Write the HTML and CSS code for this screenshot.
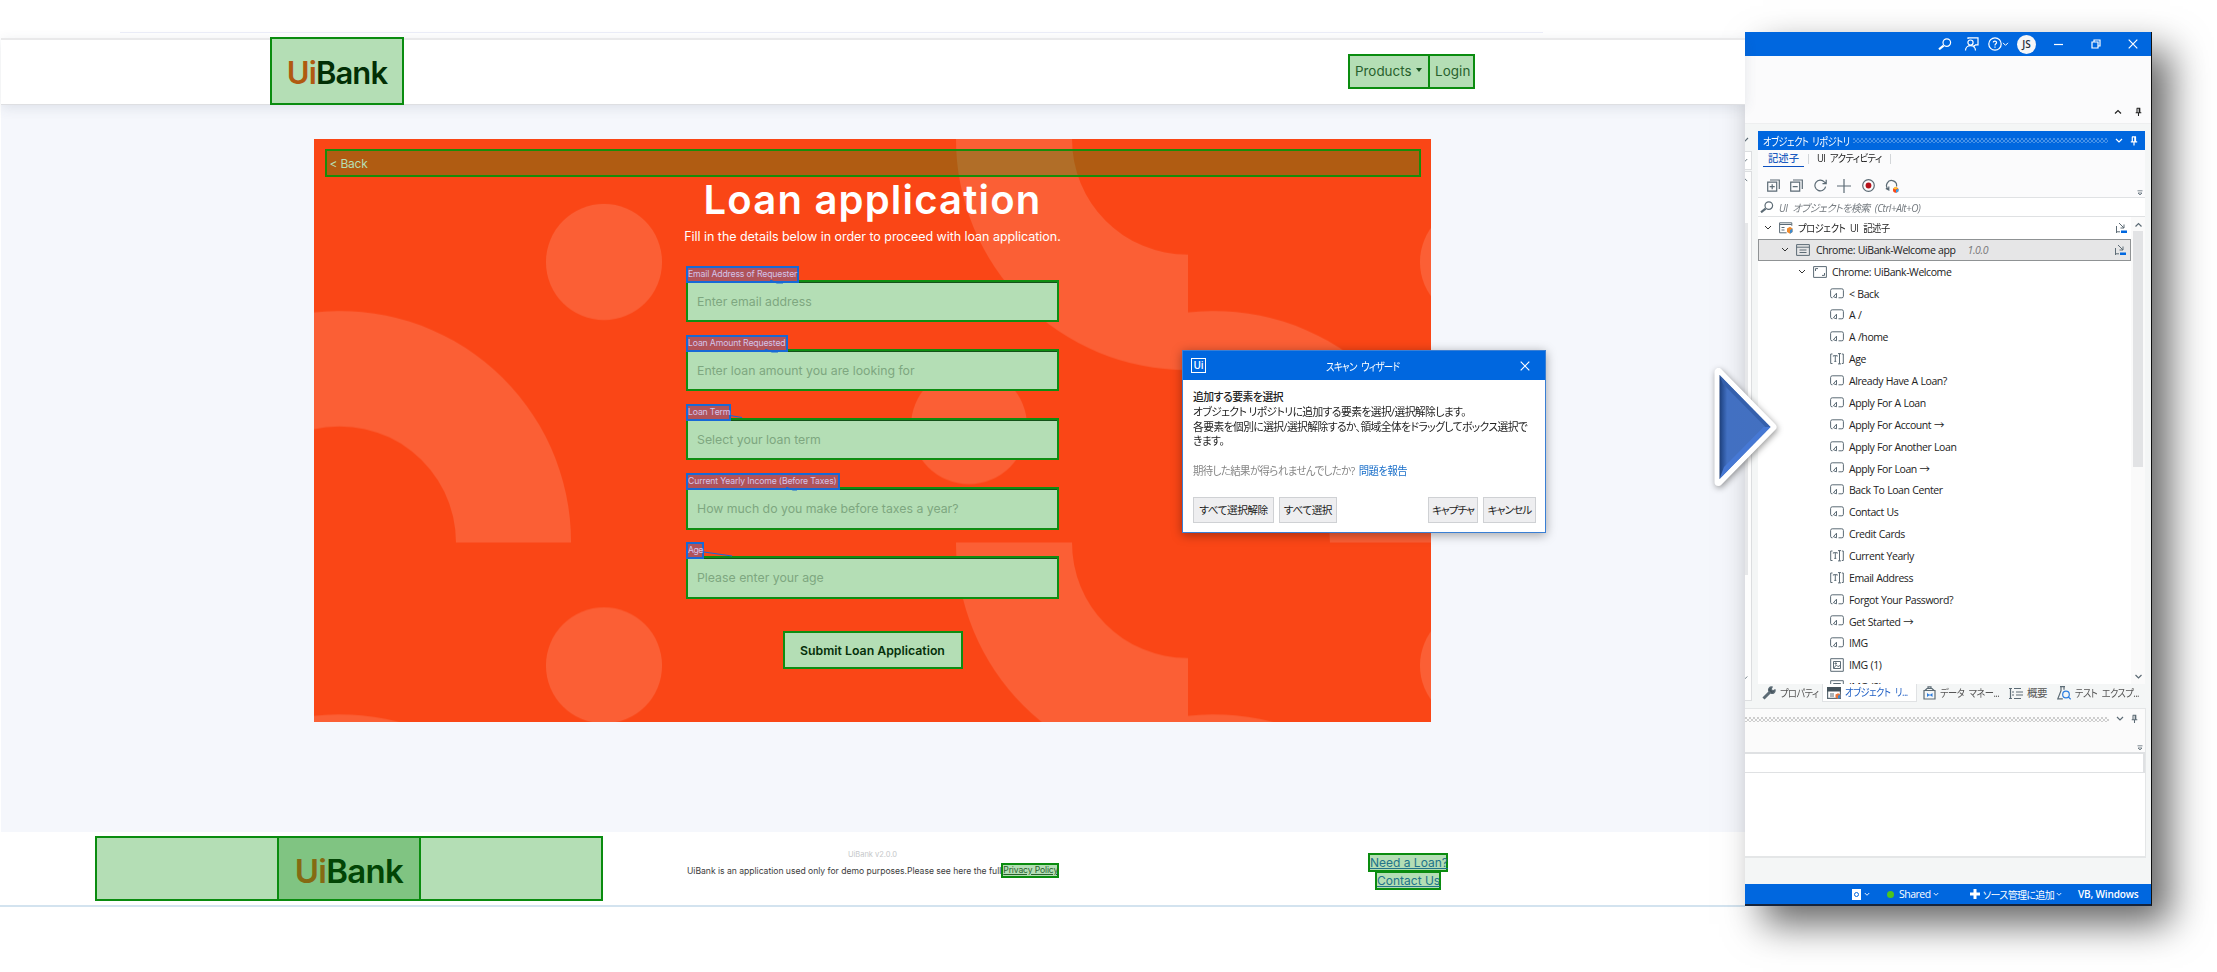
FILE: index.html
```html
<!DOCTYPE html>
<html lang="ja">
<head>
    <meta charset="UTF-8">
    <meta name="viewport" content="width=device-width, initial-scale=1.0">
    <title>UiBank - Loan application</title>
    <link rel="stylesheet" href="styles.css">
</head>
<body>
    <!-- Shared icons -->
    <svg class="sprite" width="0" height="0">
        <symbol id="button" viewBox="0 0 14 12"><path d="M2.500 9.800H2A1.500 1.500 0 0 1 .6 8.300V2.400A1.700 1.700 0 0 1 2.200.8h9.600a1.600 1.600 0 0 1 1.600 1.600v5.900a1.500 1.500 0 0 1-1.500 1.500H8.500M6.500 5.200v4.600L3.400 8.700z"/></symbol>
        <symbol id="input" viewBox="0 0 14 12"><path d="M2.500 1H.7v9.500h1.800M3.300 3.500V2.700h4v.8M5.300 2.700v5.600M4.300 8.400h2M8 .6h3M9.500.6v10.300M8 10.900h3M11.800 1h1.500v9.500h-1.500"/></symbol>
        <symbol id="image" viewBox="0 0 14 14"><path d="M.7.7h12.600v12.600H.7zM3.500 3.500h7v7h-7zM3.800 10l2.600-3 1.500 1.600 2.400-1.200M5 5h1.400v1H5z"/></symbol>
        <symbol id="screen" viewBox="0 0 14 12"><path d="M.6.6h12.800v10.800H.6zM2.500 5V2.600H5M11.500 7v2.400H9"/></symbol>
        <symbol id="app" viewBox="0 0 14 12"><path d="M.6.6h12.800v10.800H.6zM.6 3.200h12.800M3.500 6h7M3.500 8.500h7"/></symbol>
        <symbol id="down" viewBox="0 0 8 6"><path d="M1 1l3 3 3-3"/></symbol>
        <symbol id="up" viewBox="0 0 8 6"><path d="M1 4.500l3-3 3 3"/></symbol>
        <symbol id="pin" viewBox="0 0 8 10"><path d="M2 .8h4M2.300.8v5M5.500.8v5M4.800.8v5M.8 5.900h6.400M4 6v3.600"/></symbol>
        <symbol id="close" viewBox="0 0 10 10"><path d="M.7.7l8.600 8.600M9.300.7L.7 9.300"/></symbol>
        <symbol id="search" viewBox="0 0 14 12"><path d="M5.600 7.600L1 11.300" stroke-width="2.200"/><circle cx="8.800" cy="4.600" r="3.800"/></symbol>
        <symbol id="link" viewBox="0 0 12 12"><path d="M1.500 4v7M1.500 9.800H5M4 1l5 5M9 2.500V6H5.500"/><path d="M6 8.500h6V11H6z" fill="#0067df" stroke="none"/></symbol>
        <symbol id="overflow" viewBox="0 0 6 6"><path d="M.5.8h5M1 3l2 2 2-2z"/></symbol>
    </svg>

    <!-- UiBank web page -->
    <main class="bank">
        <nav class="navbar">
            <a class="logo mark"><span>Ui</span>Bank</a>
            <div class="menu">
                <a class="mark products">Products<i class="caret"></i></a>
                <a class="mark login">Login</a>
            </div>
        </nav>

        <section class="content">
            <div class="card">
                <svg class="pattern" width="1117" height="583">
                    <defs>
                        <pattern id="tile" width="874" height="403.5" patternUnits="userSpaceOnUse" x="-1">
                            <path d="M0 173.5A231 231 0 0 1 258 403.5H143A116 116 0 0 0 0 290.5z"/>
                            <path d="M643 0h116a115 115 0 0 0 115 115.5V231A231 231 0 0 1 643 0z"/>
                            <circle cx="291" cy="123" r="58"/>
                            <circle cx="656" cy="287" r="58"/>
                        </pattern>
                    </defs>
                    <rect width="1117" height="583" fill="url(#tile)"/>
                </svg>
                <a class="back">&lt; Back</a>
                <h1>Loan application</h1>
                <p class="intro">Fill in the details below in order to proceed with loan application.</p>
                <form>
                    <div class="field">
                        <label class="w-email">Email Address of Requester</label>
                        <div class="input">Enter email address</div>
                        <svg class="line line-email" width="14" height="5"><path d="M0 0l7 3h6"/></svg>
                    </div>
                    <div class="field">
                        <label class="w-amount">Loan Amount Requested</label>
                        <div class="input">Enter loan amount you are looking for</div>
                        <svg class="line line-amount" width="14" height="5"><path d="M0 0l7 3h6"/></svg>
                    </div>
                    <div class="field">
                        <label class="w-term">Loan Term</label>
                        <div class="input">Select your loan term</div>
                        <svg class="line line-term" width="14" height="5"><path d="M0 1.500l12 2"/></svg>
                    </div>
                    <div class="field">
                        <label class="w-income">Current Yearly Income (Before Taxes)</label>
                        <div class="input">How much do you make before taxes a year?</div>
                        <svg class="line line-income" width="14" height="5"><path d="M0 0l7 3h4"/></svg>
                    </div>
                    <div class="field">
                        <label class="w-age">Age</label>
                        <div class="input">Please enter your age</div>
                        <svg class="line line-age" width="30" height="6"><path d="M0 1l28 4"/></svg>
                    </div>
                    <div class="submit">Submit Loan Application</div>
                </form>
            </div>
        </section>

        <footer>
            <div class="footer-logo mark"><div class="logo-inner"><span>Ui</span>Bank</div></div>
            <div class="legal">
                <p class="version">UiBank v2.0.0</p>
                <p class="terms"><span>UiBank is an application used only for demo purposes.Please see here the full</span> <a>Privacy Policy</a></p>
            </div>
            <div class="links">
                <a class="need">Need a Loan?</a>
                <a class="contact">Contact Us</a>
            </div>
        </footer>
    </main>

    <!-- Studio window -->
    <aside class="studio">
        <div class="titlebar">
            <svg class="ic i-search" width="14" height="12"><use href="#search"/></svg>
            <svg class="ic i-person" width="15" height="14" viewBox="0 0 15 14"><path d="M4 2V.8h10v7h-2.500L10 9.300V8"/><circle cx="6.500" cy="5.600" r="2.600"/><path d="M1.500 13.500c0-6.500 10-6.500 10 0"/></svg>
            <svg class="ic i-help" width="14" height="14" viewBox="0 0 14 14"><circle cx="7" cy="7" r="6.200"/><path d="M5.200 5.400c.3-2 3.500-1.700 3.400.2C8.500 6.800 7 6.800 7 8.400M7 9.600v1.200"/></svg>
            <svg class="ic i-more" width="7" height="5"><use href="#down"/></svg>
            <span class="avatar">JS</span>
            <svg class="ic i-min" width="9" height="10" viewBox="0 0 9 10"><path d="M0 5.500h9"/></svg>
            <svg class="ic i-restore" width="10" height="10" viewBox="0 0 10 10"><path d="M1 3h6v6H1zM3 3V1h6v6H7"/></svg>
            <svg class="ic i-close" width="10" height="10"><use href="#close"/></svg>
        </div>
        <div class="ribbon">
            <svg class="ic" width="8" height="6"><use href="#up"/></svg>
            <svg class="ic" width="7" height="10"><use href="#pin"/></svg>
        </div>
        <div class="docks">
            <div class="sliver">
                <svg class="ic sliver-top" width="4" height="6" viewBox="4 0 4 6"><use href="#down" width="8" height="6"/></svg>
                <div class="sliver-box"><svg class="ic" width="3" height="5" viewBox="4 0 4 6"><use href="#down" width="8" height="6"/></svg></div>
                <div class="sliver-list">
                    <svg class="ic" width="3" height="6" viewBox="4 0 4 6"><use href="#up" width="8" height="6"/></svg>
                    <i></i>
                    <svg class="ic" width="3" height="6" viewBox="4 0 4 6"><use href="#down" width="8" height="6"/></svg>
                </div>
            </div>
            <div class="repository">
                <div class="panel-head">
                    <span>オブジェクト リポジトリ</span>
                    <i class="grip"></i>
                    <svg class="ic" width="8" height="6"><use href="#down"/></svg>
                    <svg class="ic" width="7" height="10"><use href="#pin"/></svg>
                </div>
                <div class="tabs"><b>記述子</b><div><span>UI アクティビティ</span></div></div>
                <div class="toolbar">
                    <svg class="ic" width="13" height="13" viewBox="0 0 13 13"><path d="M.7 3.200h9v9h-9zM3 1h9.300v9M5.200 5.200v5M2.700 7.700h5"/></svg>
                    <svg class="ic" width="13" height="13" viewBox="0 0 13 13"><path d="M.7 3.200h9v9h-9zM3 1h9.300v9M2.700 7.700h5"/></svg>
                    <svg class="ic" width="13" height="13" viewBox="0 0 13 13"><path d="M11.600 7.600A5.400 5.400 0 1 1 10.300 2.800L12 4.500M12.200.8v3.900H8.500"/></svg>
                    <svg class="ic" width="14" height="14" viewBox="0 0 14 14"><path d="M7 0v14M0 7h14"/></svg>
                    <svg class="ic" width="13" height="13" viewBox="0 0 13 13"><circle cx="6.500" cy="6.500" r="5.800"/><circle cx="6.500" cy="6.500" r="2.900" fill="#b5121b" stroke="none"/></svg>
                    <svg class="ic" width="14" height="14" viewBox="0 0 14 14"><path d="M3.500 10.500A5 5 0 1 1 11.500 7.500M.8 9.500l3 1.500V7.500"/><circle cx="10.700" cy="11" r="2.700" fill="#fa4616" stroke="none"/><path d="M8 9.500l2.700-1.700L13 9.300 10.500 10.500z" fill="#ffc52e" stroke="none"/><path d="M11 10.700l2.600-1v2.500L11 13.700z" fill="#38a3e8" stroke="none"/></svg>
                    <svg class="ic overflow" width="6" height="6"><use href="#overflow"/></svg>
                </div>
                <div class="search">
                    <svg class="ic" width="14" height="12"><use href="#search"/></svg>
                    <em>UI オブジェクトを検索 (Ctrl+Alt+O)</em>
                </div>
                <div class="tree-wrap">
                    <ul class="tree">
                        <li class="root"><svg class="ic" width="8" height="6"><use href="#down"/></svg><svg class="ic" width="14" height="12" viewBox="0 0 14 12"><path d="M.6.8h12.200v3M.6.8v10h7M.6 2.500h12M2.500 5.500h3M2.500 8h3"/><path d="M8 6.500l3-1.700 2.500 1.700v3.500l-2.500 1.700L8 10z" fill="#f08a2c" stroke="none"/><path d="M11 8.300l2.500-1.800v3.500L11 11.700z" fill="#3a8ad0" stroke="none"/></svg><span>プロジェクト UI 記述子</span><svg class="ic link" width="12" height="12"><use href="#link"/></svg></li>
                        <li class="app"><svg class="ic" width="8" height="6"><use href="#down"/></svg><svg class="ic" width="14" height="12"><use href="#app"/></svg><span>Chrome: UiBank-Welcome app</span><em>1.0.0</em><svg class="ic link" width="12" height="12"><use href="#link"/></svg></li>
                        <li class="page"><svg class="ic" width="8" height="6"><use href="#down"/></svg><svg class="ic" width="14" height="12"><use href="#screen"/></svg><span>Chrome: UiBank-Welcome</span></li>
                        <li><svg class="ic" width="14" height="12"><use href="#button"/></svg><span>&lt; Back</span></li>
                        <li><svg class="ic" width="14" height="12"><use href="#button"/></svg><span>A /</span></li>
                        <li><svg class="ic" width="14" height="12"><use href="#button"/></svg><span>A /home</span></li>
                        <li><svg class="ic" width="14" height="12"><use href="#input"/></svg><span>Age</span></li>
                        <li><svg class="ic" width="14" height="12"><use href="#button"/></svg><span>Already Have A Loan?</span></li>
                        <li><svg class="ic" width="14" height="12"><use href="#button"/></svg><span>Apply For A Loan</span></li>
                        <li><svg class="ic" width="14" height="12"><use href="#button"/></svg><span>Apply For Account →</span></li>
                        <li><svg class="ic" width="14" height="12"><use href="#button"/></svg><span>Apply For Another Loan</span></li>
                        <li><svg class="ic" width="14" height="12"><use href="#button"/></svg><span>Apply For Loan →</span></li>
                        <li><svg class="ic" width="14" height="12"><use href="#button"/></svg><span>Back To Loan Center</span></li>
                        <li><svg class="ic" width="14" height="12"><use href="#button"/></svg><span>Contact Us</span></li>
                        <li><svg class="ic" width="14" height="12"><use href="#button"/></svg><span>Credit Cards</span></li>
                        <li><svg class="ic" width="14" height="12"><use href="#input"/></svg><span>Current Yearly</span></li>
                        <li><svg class="ic" width="14" height="12"><use href="#input"/></svg><span>Email Address</span></li>
                        <li><svg class="ic" width="14" height="12"><use href="#button"/></svg><span>Forgot Your Password?</span></li>
                        <li><svg class="ic" width="14" height="12"><use href="#button"/></svg><span>Get Started →</span></li>
                        <li><svg class="ic" width="14" height="12"><use href="#button"/></svg><span>IMG</span></li>
                        <li><svg class="ic" width="14" height="14"><use href="#image"/></svg><span>IMG (1)</span></li>
                        <li><svg class="ic" width="14" height="14"><use href="#image"/></svg><span>IMG (2)</span></li>
                    </ul>
                    <div class="scrollbar">
                        <svg class="ic" width="9" height="6"><use href="#up"/></svg>
                        <i></i>
                        <svg class="ic" width="9" height="6"><use href="#down"/></svg>
                    </div>
                </div>
                <div class="bottom-tabs">
                    <div class="t-prop"><svg class="ic" width="14" height="14" viewBox="0 0 14 14"><path d="M1.500 12.500L8 6" stroke-width="3"/><path d="M13 3.800L10.800 5 9 3.200 10.200 1C7.500.5 6 3 6.800 5l2.200 2.200c2.200.8 4.600-1 4-3.400z" fill="#44525b"/></svg><span>プロパティ</span></div>
                    <div class="t-obj"><svg class="ic" width="14" height="12" viewBox="0 0 14 12"><path d="M.6.6h12.800v10.800H.6zM3 7h4M3 9h4"/><path d="M0 0h14v4.500H0z" fill="#44525b" stroke="none"/><path d="M8.500 7.500l2.500-1.200 2.500 1.200v3L11 12l-2.500-1.500z" fill="#e8743a" stroke="none"/><path d="M11 8.800l2.500-1.300v3L11 12z" fill="#3a8ad0" stroke="none"/></svg><span>オブジェクト リ...</span></div>
                    <div class="t-data"><svg class="ic" width="13" height="14" viewBox="0 0 13 14"><path d="M1 4.500h11v8.500H1zM2 4.500L4 2.500h5l2 2M5 2.500V.8h3v1.700"/><path d="M4 7v4l2-1.500h1.500l2 1.500V7l-2 1.500H6z" fill="#2b7de0" stroke="none"/></svg><span>データ マネー...</span></div>
                    <div class="t-outline"><svg class="ic" width="14" height="13" viewBox="0 0 14 13"><path d="M0 1.500h3M0 11.500h3M1.500 2v9M5 1.500h7M7 5h7M7 8h7M5 11.500h7M3 5h2M3 8h2"/></svg><span>概要</span></div>
                    <div class="t-test"><svg class="ic" width="14" height="14" viewBox="0 0 14 14"><path d="M3 .7h5M4 .7v4L.8 12.800h5M7 .7v3"/><g stroke="#2b7de0"><circle cx="9" cy="8.500" r="3.300"/><path d="M11.300 10.800l2.400 2.500"/></g></svg><span>テスト エクスプ...</span></div>
                </div>
            </div>
        </div>
        <div class="output">
            <div class="output-head">
                <i class="grip"></i>
                <svg class="ic" width="8" height="6"><use href="#down"/></svg>
                <svg class="ic" width="7" height="10"><use href="#pin"/></svg>
            </div>
            <div class="output-tools"><svg class="ic" width="6" height="6"><use href="#overflow"/></svg></div>
            <div class="output-input"></div>
        </div>
        <div class="statusbar">
            <span class="s-icon"><i></i></span>
            <svg class="ic s-c1" width="6" height="5"><use href="#down"/></svg>
            <i class="dot"></i>
            <span class="shared">Shared</span>
            <svg class="ic s-c2" width="6" height="5"><use href="#down"/></svg>
            <svg class="ic s-plus" width="10" height="10" viewBox="0 0 10 10"><path d="M5 0v10M0 5h10"/></svg>
            <span class="source">ソース管理に追加</span>
            <svg class="ic s-c3" width="6" height="5"><use href="#down"/></svg>
            <b>VB, Windows</b>
        </div>
    </aside>

    <svg class="arrow" width="80" height="136" viewBox="0 0 80 136">
        <defs>
            <linearGradient id="blue" x1="0" y1="0" x2="1" y2="0">
                <stop offset="0" stop-color="#1f3f78"/>
                <stop offset=".05" stop-color="#284f94"/>
                <stop offset=".15" stop-color="#4270c2"/>
                <stop offset="1" stop-color="#4370c0"/>
            </linearGradient>
        </defs>
        <path class="arrow-edge" d="M12.500 13v110l54-55z"/>
        <path d="M13.500 16v104L64.500 68z" fill="url(#blue)"/>
        <path d="M13.500 16L64.500 68l-5 0L17 25z" fill="#3560ac"/>
        <path d="M13.500 120L64.500 68l-7 0L18 108z" fill="#4678d4"/>
    </svg>

    <!-- Scan wizard -->
    <div class="dialog">
        <div class="dialog-head">
            <span class="ui-icon">Ui</span>
            <span class="dialog-title">スキャン ウィザード</span>
            <svg class="ic" width="10" height="10"><use href="#close"/></svg>
        </div>
        <div class="dialog-body">
            <h2>追加する要素を選択</h2>
            <p>オブジェクト リポジトリに追加する要素を選択/選択解除します。<br>各要素を個別に選択/選択解除するか、領域全体をドラッグしてボックス選択で<br>きます。</p>
            <p class="hint">期待した結果が得られませんでしたか? <a>問題を報告</a></p>
            <div class="buttons">
                <span class="b1">すべて選択解除</span>
                <span class="b2">すべて選択</span>
                <span class="b3">キャプチャ</span>
                <span class="b4">キャンセル</span>
            </div>
        </div>
    </div>
</body>
</html>
```
FILE: styles.css
```css
* {
    box-sizing: border-box;
}

body {
    position: relative;
    display: grid;
    grid-template-columns: 1745px 407px;
    align-items: start;
    width: 2217px;
    height: 972px;
    margin: 0;
    overflow: hidden;
    background: #fff;
    font-family: Inter, "Noto Sans CJK JP", sans-serif;
    font-size: 12px;
}

h1, h2, p, ul {
    margin: 0;
    padding: 0;
}

i {
    display: block;
}

.sprite {
    position: absolute;
}

.ic {
    flex: none;
    fill: none;
    stroke: #5c6b75;
    stroke-width: 1.2;
}

/* UiBank page */
.bank {
    height: 907px;
    padding-top: 32px;
    background: linear-gradient(#eceef8, #eceef8) 120px 32px / 1423px 1px no-repeat;
}

.navbar {
    position: relative;
    z-index: 1;
    display: flex;
    align-items: center;
    height: 67px;
    margin: 6px 0 0 1px;
    padding: 0 0 2px 269px;
    background: #fff;
    border-top: 2px solid #e9e9ea;
    border-bottom: 1px solid #dedfe2;
    box-shadow: 0 3px 12px rgba(60, 70, 100, 0.12);
}

.mark {
    background: #b4deb5;
    border: 2px solid #0a8c0f;
}

.logo {
    display: flex;
    align-items: center;
    justify-content: center;
    width: 134px;
    height: 68px;
    margin: -2px 0;
    padding-top: 3px;
    color: #022f05;
    font-size: 31px;
    font-weight: 600;
    letter-spacing: -0.9px;
}

.logo span {
    color: #b05a11;
}

.menu {
    display: flex;
    margin-left: 944px;
}

.menu a {
    display: flex;
    align-items: center;
    height: 35px;
    padding-left: 5px;
    color: #28612d;
    font-size: 13.4px;
}

.products {
    width: 82px;
}

.login {
    width: 47px;
    margin-left: -2px;
    letter-spacing: 0.1px;
}

.caret {
    margin: -2px 0 0 4px;
    border: 3.5px solid transparent;
    border-top: 4px solid #1b5420;
    border-bottom: 0;
}

.content {
    height: 727px;
    margin-left: 1px;
    padding: 34px 0 0 313px;
    background: #f5f7fc;
}

.card {
    position: relative;
    display: flex;
    flex-direction: column;
    align-items: center;
    width: 1117px;
    height: 583px;
    padding-top: 10px;
    background: #fa4616;
    color: #fff;
}

.pattern {
    position: absolute;
    top: 0;
    left: 0;
    fill: #fb5f35;
}

.back {
    position: relative;
    width: 1096px;
    height: 28px;
    padding-left: 3px;
    background: rgba(5, 146, 10, 0.3);
    border: 2px solid #188c0a;
    color: #b6dfb4;
    font-size: 12px;
    line-height: 25px;
    letter-spacing: -0.2px;
}

h1 {
    position: relative;
    height: 52px;
    font-size: 40px;
    font-weight: 600;
    line-height: 45px;
    letter-spacing: 1.2px;
    white-space: nowrap;
}

.intro {
    position: relative;
    font-size: 12.5px;
    line-height: 16px;
    white-space: nowrap;
    letter-spacing: -0.04px;
}

form {
    position: relative;
    display: flex;
    flex-direction: column;
    width: 373px;
    margin-top: 20.6px;
}

.field {
    position: relative;
    height: 69.2px;
}

label {
    position: relative;
    z-index: 1;
    display: block;
    height: 17px;
    margin-bottom: -3px;
    background: #b0535a;
    border: 2px solid #1769d6;
    color: #d3c3ea;
    font-size: 8.7px;
    line-height: 12px;
    white-space: nowrap;
    letter-spacing: -0.16px;
}

.w-email { width: 113px; }
.w-amount { width: 102px; }
.w-term { width: 45px; }
.w-income { width: 154px; }
.w-age { width: 18px; letter-spacing: -0.5px; }

.input {
    height: 42.5px;
    padding-left: 9px;
    background: #b4deb5;
    border: 2px solid #0f8d12;
    box-shadow: inset 0 1px 0 #14521a;
    color: #7ea780;
    font-size: 12.3px;
    line-height: 39px;
}

.line {
    position: absolute;
    z-index: 2;
    top: 14px;
    fill: none;
    stroke: #1769d6;
    stroke-width: 1.2;
}

.line-email { left: 84px; }
.line-amount { left: 79px; }
.line-term { left: 44px; top: 10px; }
.line-income { left: 100px; }
.line-age { left: 18px; top: 9px; }

.submit {
    align-self: center;
    width: 180px;
    height: 38px;
    margin-top: 19.4px;
    background: #b4deb5;
    border: 2px solid #0f8d12;
    color: #06300a;
    font-size: 12.3px;
    font-weight: 600;
    line-height: 35px;
    text-align: center;
}

footer {
    display: flex;
    height: 75px;
    padding: 4px 0 0 95px;
    border-bottom: 2px solid #d3e3ef;
    background: #fff;
}

.footer-logo {
    display: flex;
    justify-content: center;
    width: 508px;
    height: 65px;
}

.logo-inner {
    width: 144px;
    background: #80c482;
    border: solid #0a8c0f;
    border-width: 0 2px;
    color: #024505;
    font-size: 33px;
    font-weight: 600;
    line-height: 66px;
    letter-spacing: -0.7px;
    text-align: center;
}

.logo-inner span {
    color: #856a12;
}

.legal {
    width: 373px;
    margin-left: 83px;
    text-align: center;
    white-space: nowrap;
}

.version {
    margin-top: 13px;
    color: #c5c7c9;
    font-size: 7.5px;
    line-height: 11px;
}

.terms {
    display: flex;
    justify-content: space-between;
    align-items: center;
    margin-top: 3px;
    padding-left: 1px;
    color: #3c3c3c;
    font-size: 8.6px;
    line-height: 14px;
    letter-spacing: -0.02px;
}

.terms a {
    width: 58px;
    height: 15px;
    background: #b4deb5;
    border: 2px solid #0a8c0f;
    color: #28612d;
    line-height: 10px;
    letter-spacing: -0.15px;
    text-decoration: underline;
}

.links {
    display: flex;
    flex-direction: column;
    align-items: center;
    width: 80px;
    margin: 17px 0 0 309px;
}

.links a {
    height: 19px;
    margin-bottom: -1px;
    background: #b4deb5;
    border: 2px solid #0a8c0f;
    color: #227389;
    font-size: 12px;
    line-height: 15px;
    text-align: center;
    text-decoration: underline;
    white-space: nowrap;
}

.need { width: 80px; }
.contact { width: 66px; }

/* Studio window */
.studio {
    position: relative;
    height: 874px;
    margin-top: 32px;
    background: #f4f6f6;
    border-right: 1px solid #111;
    border-bottom: 2px solid #15243c;
    box-shadow: 18px 18px 36px rgba(0, 0, 0, 0.6);
    color: #222;
    font-family: "Open Sans", "Noto Sans CJK JP", sans-serif;
    font-size: 11px;
    font-feature-settings: "palt";
    white-space: nowrap;
}

.titlebar {
    display: flex;
    align-items: center;
    height: 24px;
    padding-left: 193px;
    background: #0067df;
}

.titlebar .ic,
.statusbar .ic,
.panel-head .ic,
.dialog .ic {
    stroke: #fff;
}

.i-person { margin-left: 12px; }
.i-help { margin-left: 9px; }

.avatar {
    width: 19px;
    height: 19px;
    margin-left: 8px;
    border-radius: 50%;
    background: #f6f7f8;
    color: #26303a;
    font-size: 10px;
    font-weight: 600;
    line-height: 19px;
    text-align: center;
}

.i-min { margin-left: 18px; }
.i-restore { margin-left: 28px; }
.i-close { margin-left: 27px; }

.ribbon {
    display: flex;
    align-items: center;
    justify-content: flex-end;
    gap: 13px;
    height: 68px;
    padding: 44px 9px 0 0;
    background: #fbfbfc;
    border-bottom: 1px solid #eeeff0;
}

.ribbon .ic {
    stroke: #222;
}

.docks {
    display: flex;
    height: 577px;
}

.sliver {
    width: 7px;
    padding-top: 13px;
}

.sliver .ic {
    display: block;
}

.sliver-box {
    height: 19px;
    margin-top: 8px;
    padding-top: 6px;
    background: #fff;
    border: solid #dcdee0;
    border-width: 1px 1px 1px 0;
}

.sliver-list {
    display: flex;
    flex-direction: column;
    height: 530px;
    margin-top: 1px;
    padding: 5px 0 19px;
    background: #fdfdfd;
    border: solid #dcdee0;
    border-width: 1px 1px 1px 0;
}

.sliver-list i {
    flex: 1;
    width: 3px;
    margin: 40px 0 100px;
    background: #e6e7e9;
}

.repository {
    width: 387px;
    margin: 7px 0 0 6px;
}

.panel-head {
    display: flex;
    align-items: center;
    height: 19px;
    padding: 0 7px 0 5px;
    background: #0067df;
    color: #fff;
}

.panel-head span {
    width: 85px;
    font-size: 11px;
    letter-spacing: -0.5px;
    word-spacing: 2px;
    transform: scaleX(0.83);
    transform-origin: left;
}

.panel-head .ic {
    width: 8px;
    margin-left: 7px;
}

.grip {
    height: 5px;
    background: radial-gradient(circle at 1px 1px, #4a93e8 0.7px, transparent 0.9px) 0 0 / 4px 4px, radial-gradient(circle at 1px 1px, #4a93e8 0.7px, transparent 0.9px) 2px 2px / 4px 4px;
}

.panel-head .grip {
    flex: 1;
    margin-left: 5px;
}

.tabs {
    display: flex;
    height: 24px;
    padding-left: 5px;
    background: #fbfbfc;
    line-height: 18px;
}

.tabs b {
    width: 41px;
    height: 17px;
    border-bottom: 1.5px solid #0a4fc0;
    color: #1c5cc0;
    font-size: 10.3px;
    font-weight: 500;
    line-height: 17px;
    text-align: center;
}

.tabs div {
    width: 83px;
    height: 10px;
    margin: 4px 0 0 4px;
    padding-left: 8px;
    border: solid #d3d6d9;
    border-width: 0 1px;
    font-size: 10.5px;
    line-height: 9px;
    letter-spacing: -0.7px;
}

.tabs span {
    display: inline-block;
    word-spacing: 3px;
    transform: scaleX(0.9);
    transform-origin: left;
}

.toolbar {
    display: flex;
    align-items: center;
    gap: 10.4px;
    height: 24px;
    padding-left: 9px;
    background: #fbfbfc;
    border-bottom: 1px solid #e0e2e4;
}

.toolbar .overflow {
    margin: 14px 2px 0 auto;
    stroke-width: 0.8;
}

.search {
    display: flex;
    align-items: center;
    gap: 5px;
    height: 19px;
    padding-left: 2px;
    background: #fff;
    border-bottom: 1px solid #dfe1e3;
    color: #757b80;
    font-size: 10.5px;
}

.search em {
    letter-spacing: -0.5px;
    word-spacing: 3px;
    transform: scaleX(0.95);
    transform-origin: left;
}

.tree-wrap {
    display: flex;
    height: 467px;
    overflow: hidden;
    background: #fff;
}

.tree {
    width: 373px;
    list-style: none;
}

.tree li {
    display: flex;
    align-items: center;
    height: 21.86px;
    padding-left: 72px;
    font-size: 10.5px;
    letter-spacing: -0.42px;
    word-spacing: 0.4px;
}

.tree span {
    margin-left: 5px;
}

.tree .ic + .ic {
    margin-left: 7px;
}

.tree .ic {
    stroke-width: 1;
}

.tree [width="8"] {
    stroke: #333;
}

.tree .root { padding-left: 6px; }
.tree .page { padding-left: 40px; }

.tree .root span {
    word-spacing: 3px;
    transform: scaleX(0.88);
    transform-origin: left;
}

.tree .app {
    padding-left: 22px;
    background: #e6e6e7;
    border: 1px solid #8f9294;
}

.tree .app span {
    margin-left: 6px;
}

.tree em {
    margin-left: 12px;
    color: #777;
}

.tree .link {
    margin: 0 4px 0 auto;
}

.scrollbar {
    display: flex;
    flex-direction: column;
    align-items: center;
    justify-content: space-between;
    width: 14px;
    padding: 5px 0 4px;
    background: #fafafa;
}

.scrollbar i {
    width: 10px;
    height: 236px;
    margin: 3px 0 auto;
    background: #e2e3e5;
}

.bottom-tabs {
    display: grid;
    grid-template-columns: 64px 95px 91px 49px 87px;
    height: 17px;
    color: #555;
    font-size: 10.5px;
    line-height: 17px;
    letter-spacing: -0.6px;
}

.bottom-tabs div {
    display: flex;
    align-items: center;
    gap: 4px;
    padding-left: 4px;
}

.bottom-tabs span {
    word-spacing: 3px;
    transform: scaleX(0.88);
    transform-origin: left;
}

.bottom-tabs .t-obj {
    background: #fff;
    border: 1px solid #e0e2e4;
    border-top: 0;
    color: #1f5fc4;
}

.bottom-tabs .t-data { padding-left: 6px; }
.bottom-tabs .t-outline { padding-left: 1px; }
.bottom-tabs .t-test { padding-left: 0; }

.bottom-tabs .t-outline span {
    transform: none;
}

.output {
    width: 401px;
    height: 150px;
    margin-top: 7px;
    background: #fff;
    border: solid #e4e6e7;
    border-width: 1px 1px 2px 0;
}

.output-head {
    display: flex;
    align-items: center;
    height: 18px;
    padding-top: 2px;
    background: #fbfbfb;
}

.output-head .grip {
    width: 364px;
    background: radial-gradient(circle at 1px 1px, #ccc 0.7px, transparent 0.9px) 0 0 / 4px 4px, radial-gradient(circle at 1px 1px, #ccc 0.7px, transparent 0.9px) 2px 2px / 4px 4px;
}

.output-head .ic {
    margin-left: 7px;
}

.output-tools {
    display: flex;
    align-items: flex-end;
    justify-content: flex-end;
    height: 25px;
    padding: 0 2px 1px 0;
    background: #fbfbfb;
}

.output-tools .ic {
    stroke-width: 0.8;
}

.output-input {
    height: 21px;
    border: solid #dfe1e3;
    border-width: 2px 2px 1px 0;
}

.statusbar {
    position: absolute;
    bottom: 0;
    left: 0;
    display: flex;
    align-items: center;
    width: 406px;
    height: 20px;
    padding-left: 107px;
    background: #0067df;
    color: #fff;
    font-size: 10.5px;
}

.s-icon {
    display: grid;
    place-items: center;
    width: 9px;
    height: 11px;
    background: #fff;
}

.s-icon i {
    width: 5px;
    height: 5px;
    border: 1px solid #0067df;
    border-radius: 50%;
}

.s-c1 { margin-left: 3px; }

.dot {
    width: 7px;
    height: 7px;
    margin-left: 17px;
    border-radius: 50%;
    background: #4cc51c;
}

.shared {
    width: 34px;
    margin-left: 5px;
    letter-spacing: -0.5px;
}

.statusbar .s-plus {
    margin-left: 31px;
    stroke-width: 3;
}

.source {
    width: 73px;
    margin-left: 3px;
    font-size: 10px;
    letter-spacing: -0.65px;
}

.statusbar b {
    margin-left: 16px;
    font-size: 10px;
    font-weight: 600;
    letter-spacing: -0.15px;
}

/* Arrow between the page and the window */
.arrow {
    position: absolute;
    top: 359px;
    left: 1706px;
    filter: drop-shadow(1px 2px 3px rgba(0, 0, 0, 0.4));
}

.arrow-edge {
    fill: #fff;
    stroke: #fff;
    stroke-width: 8;
    stroke-linejoin: round;
}

/* Scan wizard */
.dialog {
    position: absolute;
    top: 350px;
    left: 1182px;
    width: 364px;
    height: 183px;
    background: #fff;
    border: 1px solid #3a7fd4;
    box-shadow: 0 2px 10px rgba(0, 0, 0, 0.35);
    color: #222;
    font-family: "Open Sans", "Noto Sans CJK JP", sans-serif;
    font-feature-settings: "palt";
    white-space: nowrap;
}

.dialog-head {
    display: flex;
    align-items: center;
    justify-content: space-between;
    height: 29px;
    padding: 0 15px 0 8px;
    background: #0067df;
    color: #fff;
}

.ui-icon {
    width: 15px;
    height: 15px;
    border: 1.5px solid #fff;
    font-size: 10px;
    font-weight: 600;
    line-height: 12px;
    text-align: center;
}

.dialog-title {
    font-size: 11px;
    letter-spacing: -0.8px;
    word-spacing: 3px;
    transform: scaleX(0.86);
}

.dialog-body {
    padding: 8px 9px 0 10px;
}

h2 {
    font-size: 10.8px;
    font-weight: 500;
    line-height: 17px;
    letter-spacing: -0.45px;
}

.dialog p {
    font-size: 10.8px;
    line-height: 14.7px;
    letter-spacing: -0.55px;
    transform: scaleX(0.995);
    transform-origin: left;
}

.dialog .hint {
    margin-top: 15px;
    color: #858585;
    word-spacing: 2px;
    transform: scaleX(0.96);
}

.hint a {
    color: #1a6fc9;
}

.buttons {
    display: flex;
    gap: 5px;
    margin-top: 18px;
}

.buttons span {
    height: 26px;
    background: #eeeef0;
    border: 1px solid #cfd1d4;
    font-size: 10.7px;
    line-height: 25px;
    letter-spacing: -0.5px;
    text-align: center;
}

.b1 { width: 81px; }
.b2 { width: 58px; }
.buttons .b3 { width: 50px; margin-left: auto; letter-spacing: -1px; }
.buttons .b4 { width: 53px; letter-spacing: -0.9px; }
```
